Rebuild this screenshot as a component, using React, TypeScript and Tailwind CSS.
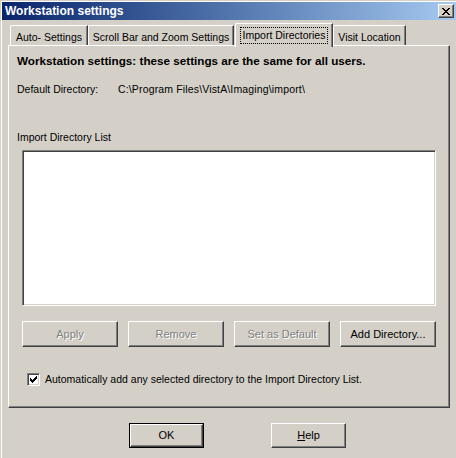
import React from "react";

const raised =
  "border-t border-l border-r border-b border-t-white border-l-white border-r-[#404040] border-b-[#404040] shadow-[inset_-1px_-1px_0_#808080]";

function Btn({ label, disabled, className = "" }: { label: React.ReactNode; disabled?: boolean; className?: string }) {
  return (
    <div
      className={`w-[96px] h-[26px] bg-[#d4d0c8] text-[11px] flex items-center justify-center ${raised} ${
        disabled ? "text-[#808080] [text-shadow:1px_1px_0_#ffffff]" : "text-black"
      } ${className}`}
    >
      {label}
    </div>
  );
}

const tabBase =
  "h-[20px] border-t border-l border-white border-r border-r-[#404040] shadow-[inset_-1px_0_0_#808080] rounded-tl-[2px] flex items-center justify-center pt-[3px]";

export default function App() {
  return (
    <div className="w-[456px] h-[458px] bg-[#d4d0c8] overflow-hidden text-[10.5px] leading-[13px] text-black font-['Liberation_Sans',Arial,sans-serif] border-t border-l border-[#d4d0c8]">
      <div className="h-full border-t border-l border-white flex flex-col">
        {/* Title bar */}
        <div className="h-[18px] flex items-center justify-between bg-gradient-to-r from-[#0a246a] to-[#a6caf0]">
          <span className="pl-[3px] text-white font-bold text-[12px] leading-[14px]">Workstation settings</span>
          <div className={`w-[16px] h-[14px] mr-[2px] bg-[#d4d0c8] flex items-center justify-center ${raised}`}>
            <svg width="8" height="7" viewBox="0 0 8 7" shapeRendering="crispEdges">
              <path d="M0 0h2v1h-2zM6 0h2v1h-2zM1 1h2v1h-2zM5 1h2v1h-2zM2 2h4v1h-4zM3 3h2v1h-2zM2 4h4v1h-4zM1 5h2v1h-2zM5 5h2v1h-2zM0 6h2v1h-2zM6 6h2v1h-2z" fill="#000" />
            </svg>
          </div>
        </div>

        {/* Tabs */}
        <div className="h-[25px] flex items-end pl-[8px] relative z-10">
          <div className={`w-[78px] ${tabBase}`}>
            <span>Auto- Settings</span>
          </div>
          <div className={`w-[146px] ${tabBase}`}>
            <span>Scroll Bar and Zoom Settings</span>
          </div>
          <div className="ml-[1px] w-[98px] h-[24px] -mb-[2px] bg-[#d4d0c8] border-t border-l border-white border-r border-r-[#404040] shadow-[inset_-1px_0_0_#808080] rounded-tl-[2px] flex items-start justify-center pt-[3px]">
            <span className="border border-dotted border-black px-[2px] leading-[15px]">Import Directories</span>
          </div>
          <div className={`w-[73px] ${tabBase}`}>
            <span>Visit Location</span>
          </div>
        </div>

        {/* Panel */}
        <div className={`ml-[6px] w-[442px] h-[363px] bg-[#d4d0c8] ${raised} flex flex-col pl-[8px]`}>
          <div className="mt-[8px] font-bold text-[11.7px]">Workstation settings: these settings are the same for all users.</div>
          <div className="mt-[16px] flex">
            <span className="w-[101px]">Default Directory:</span>
            <span className="tracking-[0.15px]">C:\Program Files\VistA\Imaging\import\</span>
          </div>
          <div className="mt-[35px]">Import Directory List</div>
          <div className="mt-[6px] ml-[5px] w-[414px] h-[156px] bg-white border-t border-l border-[#808080] border-r border-b border-r-white border-b-white shadow-[inset_1px_1px_0_#404040,inset_-1px_-1px_0_#d4d0c8]" />
          <div className="mt-[15px] ml-[5px] w-[414px] flex gap-[10px]">
            <Btn label="Apply" disabled />
            <Btn label="Remove" disabled />
            <Btn label="Set as Default" disabled />
            <Btn label="Add Directory..." />
          </div>
          <div className="mt-[26px] ml-[10px] flex items-center gap-[5px]">
            <div className="w-[13px] h-[13px] bg-white border-t border-l border-[#808080] border-r border-b border-r-white border-b-white shadow-[inset_1px_1px_0_#404040,inset_-1px_-1px_0_#d4d0c8] flex items-center justify-center">
              <svg width="7" height="7" viewBox="0 0 7 7" shapeRendering="crispEdges">
                <path d="M6 0h1v1h-1zM5 1h2v1h-2zM0 2h1v1h-1zM4 2h3v1h-3zM0 3h2v1h-2zM3 3h3v1h-3zM0 4h5v1h-5zM1 5h3v1h-3zM2 6h1v1h-1z" fill="#000" />
              </svg>
            </div>
            <span>Automatically add any selected directory to the Import Directory List.</span>
          </div>
        </div>

        {/* Bottom buttons */}
        <div className="mt-[15px] flex text-[11px]">
          <div className="ml-[127px] w-[75px] h-[25px] border border-black">
            <div className={`w-full h-full flex items-center justify-center ${raised}`}>OK</div>
          </div>
          <div className={`ml-[67px] w-[75px] h-[25px] flex items-center justify-center ${raised}`}>
            <span>
              <span className="underline">H</span>elp
            </span>
          </div>
        </div>
      </div>
    </div>
  );
}
